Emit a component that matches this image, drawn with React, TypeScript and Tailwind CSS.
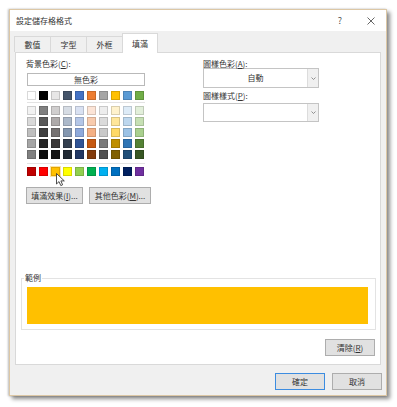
import React from "react";

const theme = ["#FFFFFF", "#000000", "#E7E6E6", "#44546A", "#4472C4", "#ED7D31", "#A5A5A5", "#FFC000", "#5B9BD5", "#70AD47"];

const tints = [
  ["#F2F2F2", "#7F7F7F", "#D0CECE", "#D6DCE4", "#D9E1F2", "#FCE4D6", "#EDEDED", "#FFF2CC", "#DDEBF7", "#E2EFDA"],
  ["#D9D9D9", "#595959", "#AEAAAA", "#ACB9CA", "#B4C6E7", "#F8CBAD", "#DBDBDB", "#FFE699", "#BDD7EE", "#C6E0B4"],
  ["#BFBFBF", "#404040", "#757171", "#8497B0", "#8EA9DB", "#F4B084", "#C9C9C9", "#FFD966", "#9BC2E6", "#A9D08E"],
  ["#A6A6A6", "#262626", "#3A3838", "#333F4F", "#305496", "#C65911", "#7B7B7B", "#BF8F00", "#2F75B5", "#548235"],
  ["#808080", "#0D0D0D", "#161616", "#222B35", "#203764", "#833C0C", "#525252", "#806000", "#1F4E78", "#375623"],
];

const standard = ["#C00000", "#FF0000", "#FFC000", "#FFFF00", "#92D050", "#00B050", "#00B0F0", "#0070C0", "#002060", "#7030A0"];

const tabs = ["數值", "字型", "外框", "填滿"];

function Swatch({ color, selected }: { color: string; selected?: boolean }) {
  return (
    <div
      className={
        selected
          ? "h-[9px] w-[9px] border border-[#e2a400] outline outline-1 outline-[#fbe3a6]"
          : "h-[9px] w-[9px] border border-black/15"
      }
      style={{ backgroundColor: color }}
    />
  );
}

function SwatchRow({ colors, selected = -1 }: { colors: string[]; selected?: number }) {
  return (
    <div className="flex gap-[3px]">
      {colors.map((c, i) => (
        <Swatch key={i} color={c} selected={i === selected} />
      ))}
    </div>
  );
}

function Button({ children, className = "" }: { children: React.ReactNode; className?: string }) {
  return (
    <div className={"flex items-center justify-center border border-[#adadad] bg-[#e1e1e1] " + className}>
      {children}
    </div>
  );
}

function Dropdown({ value, className = "" }: { value?: string; className?: string }) {
  return (
    <div className={"flex w-[116px] border border-[#c4c4c4] bg-white " + className}>
      <div className="flex flex-1 items-center justify-center">{value}</div>
      <div className="flex w-[11px] items-center justify-center border-l border-[#dcdcdc] bg-[#f0f0f0]">
        <svg width="5" height="3" viewBox="0 0 5 3">
          <path d="M0.5 0.5 L2.5 2.5 L4.5 0.5" fill="none" stroke="#777" strokeWidth="0.8" />
        </svg>
      </div>
    </div>
  );
}

export default function App() {
  return (
    <div className="h-[407px] w-[397px] overflow-hidden bg-white pt-[9px] font-['Noto_Sans_CJK_TC','Noto_Sans',sans-serif] text-[8px] text-[#333]">
      <div className="ml-[9px] flex h-[387px] w-[378px] flex-col border border-[#dcc7a5] bg-[#f0f0f0] shadow-[3px_3px_4px_rgba(0,0,0,0.45),-1px_0_2px_rgba(0,0,0,0.25)]">
        {/* title bar */}
        <div className="flex h-[21px] items-center bg-white pl-[6px] pr-[11px]">
          <span>設定儲存格格式</span>
          <span className="ml-auto text-[9px] text-[#555]">?</span>
          <svg className="ml-[25px]" width="8" height="8" viewBox="0 0 8 8">
            <path d="M0.5 0.5 L7.5 7.5 M7.5 0.5 L0.5 7.5" stroke="#555" strokeWidth="0.9" />
          </svg>
        </div>

        {/* tabs */}
        <div className="mt-[2px] flex h-[19px] items-end pl-[4px]">
          {tabs.map((t, i) =>
            i === 3 ? (
              <div
                key={t}
                className="relative z-10 mb-[-1px] flex h-[20px] w-[36px] items-center justify-center border-x border-t border-[#d9d9d9] bg-white"
              >
                {t}
              </div>
            ) : (
              <div
                key={t}
                className="flex h-[16px] w-[36px] items-center justify-center border-l border-t border-[#d9d9d9]"
              >
                {t}
              </div>
            )
          )}
        </div>

        {/* panel */}
        <div className="relative mx-[5px] h-[313px] border border-[#d9d9d9] bg-white">
          <div className="flex pl-[10px] pt-[6px]">
            {/* background colour */}
            <div className="w-[177px]">
              <div className="leading-[10px]">
                背景色彩(<span className="underline">C</span>):
              </div>
              <div className="ml-[1px] mt-[4px] flex h-[13px] w-[118px] items-center justify-center border border-[#b9b9b9] bg-white">
                無色彩
              </div>
              <div className="ml-[1px] mt-[5px]">
                <SwatchRow colors={theme} />
              </div>
              <div className="ml-[1px] mt-[2px] h-px w-[118px] bg-[#e3e3e3]" />
              <div className="ml-[1px] mt-[3px] flex flex-col gap-[2px]">
                {tints.map((row, i) => (
                  <SwatchRow key={i} colors={row} />
                ))}
              </div>
              <div className="ml-[1px] mt-[4px] h-px w-[118px] bg-[#e3e3e3]" />
              <div className="ml-[1px] mt-[3px]">
                <SwatchRow colors={standard} selected={2} />
              </div>
              <div className="mt-[11px] flex gap-[6px]">
                <Button className="h-[17px] w-[57px]">
                  填滿效果(<span className="underline">I</span>)...
                </Button>
                <Button className="h-[17px] w-[62px]">
                  其他色彩(<span className="underline">M</span>)...
                </Button>
              </div>
            </div>

            {/* pattern */}
            <div className="w-[116px]">
              <div className="leading-[10px]">
                圖樣色彩(<span className="underline">A</span>):
              </div>
              <Dropdown value="自動" className="mt-[-1px] h-[20px]" />
              <div className="mt-[3px] leading-[10px]">
                圖樣樣式(<span className="underline">P</span>):
              </div>
              <Dropdown className="mt-[2px] h-[19px]" />
            </div>
          </div>

          {/* sample */}
          <fieldset className="ml-[5px] mt-[69px] w-[355px] border border-[#e3e3e3] pb-[5px] pl-[5px] pr-[7px] pt-[4px]">
            <legend className="ml-[-3px] px-[1px] leading-[10px]">範例</legend>
            <div className="h-[37px] bg-[#FFC000]" />
          </fieldset>

          <div className="mr-[5px] mt-[9px] flex justify-end">
            <Button className="h-[17px] w-[50px]">
              清除(<span className="underline">R</span>)
            </Button>
          </div>

          {/* mouse pointer */}
          <svg className="absolute left-[40px] top-[120px]" width="10" height="14" viewBox="0 0 10 14">
            <path
              d="M0.5 0.5 L0.5 11 L3 8.6 L4.8 12.6 L6.6 11.8 L4.9 7.9 L8.3 7.9 Z"
              fill="#fff"
              stroke="#222"
              strokeWidth="0.8"
              strokeLinejoin="round"
            />
          </svg>
        </div>

        {/* footer */}
        <div className="flex justify-end gap-[7px] pr-[4px] pt-[8px]">
          <div className="flex h-[17px] w-[50px] items-center justify-center border border-[#3c8ce0] bg-[#e1e1e1]">
            確定
          </div>
          <Button className="h-[17px] w-[50px]">取消</Button>
        </div>
      </div>
    </div>
  );
}
